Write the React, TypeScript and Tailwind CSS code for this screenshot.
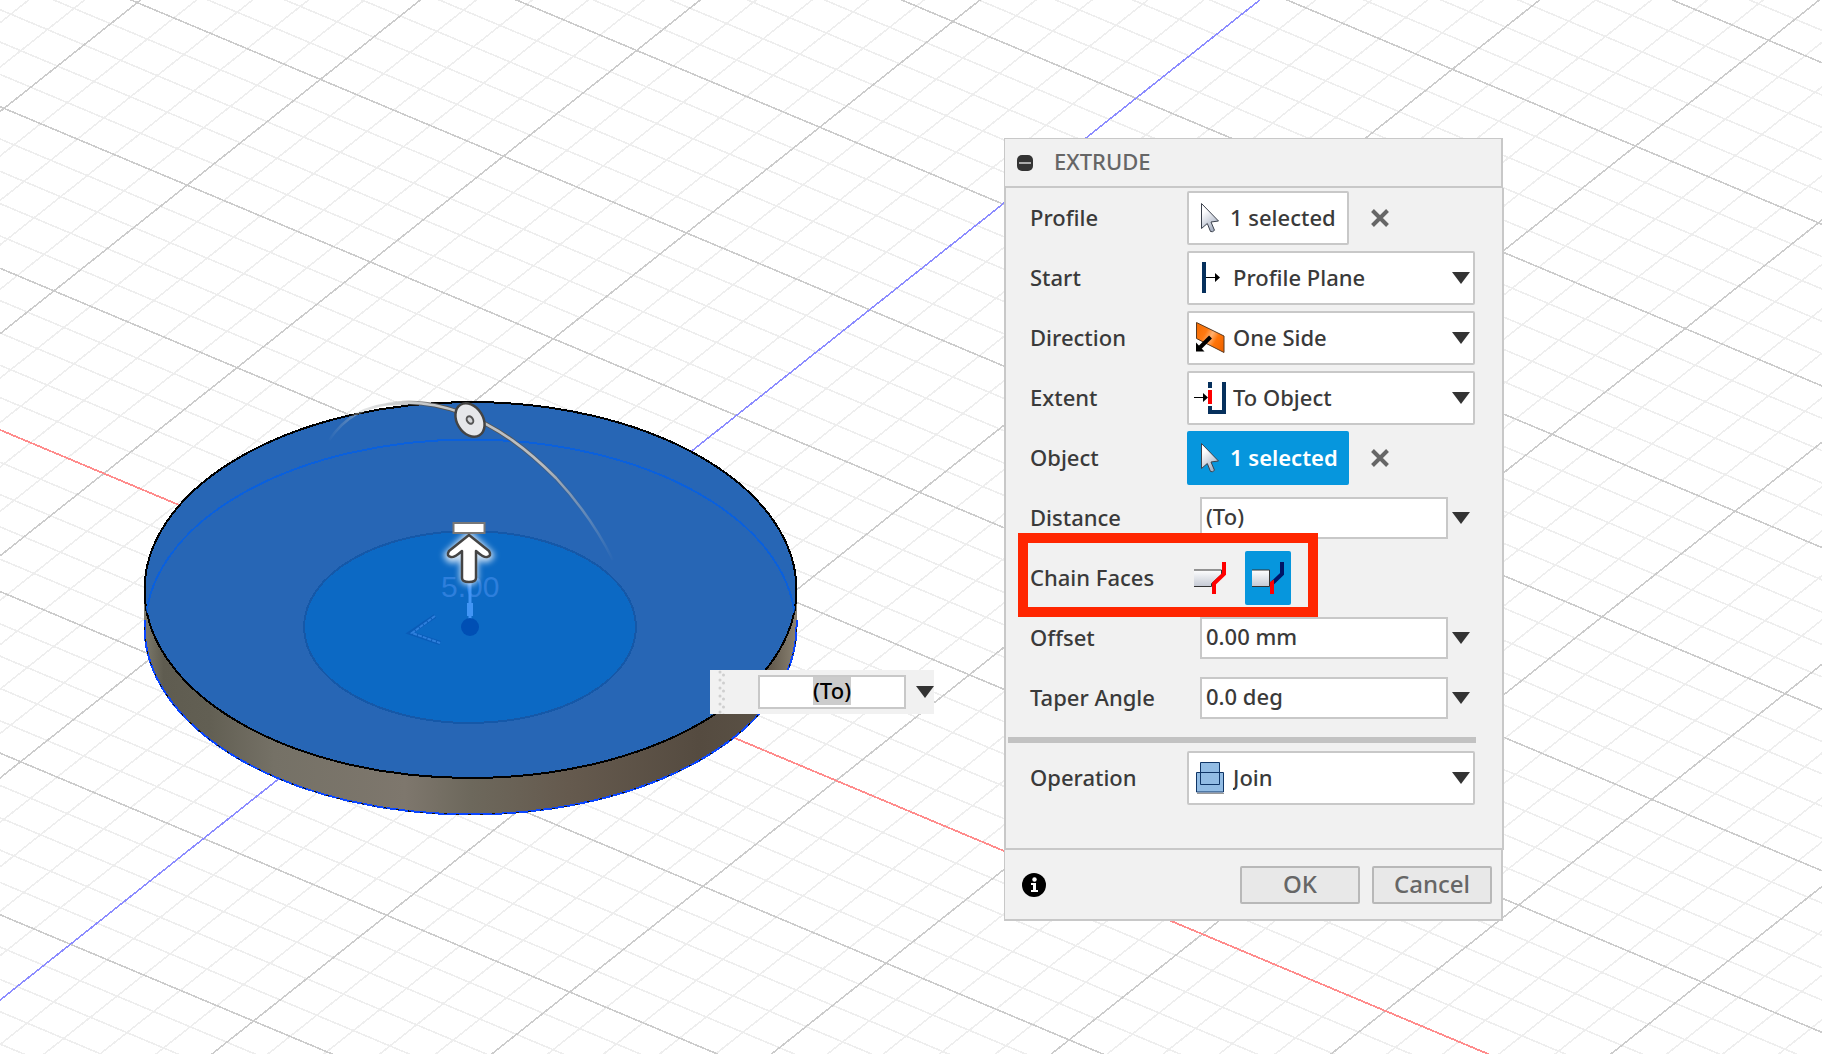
import { useEffect, useRef } from 'react';
import type { ReactNode } from 'react';

const NAVY = '#06305c';

// Ground plane: screen vectors of one major cell and the projected origin
const ORIGIN = { x: 470, y: 627 };
const U = { x: 183.08, y: 76.78 };
const V = { x: -133.2, y: 105.75 };
const SUBDIVISIONS = 5;
const REACH = 14;

interface GridLine {
  key: string;
  index: number;
  x1: number;
  y1: number;
  x2: number;
  y2: number;
}

function gridLines(step: typeof U, along: typeof U, name: string): GridLine[] {
  const lines: GridLine[] = [];
  for (let i = -REACH * SUBDIVISIONS; i <= REACH * SUBDIVISIONS; i++) {
    const cx = ORIGIN.x + (step.x * i) / SUBDIVISIONS;
    const cy = ORIGIN.y + (step.y * i) / SUBDIVISIONS;
    lines.push({
      key: `${name}${i}`,
      index: i,
      x1: cx - along.x * REACH,
      y1: cy - along.y * REACH,
      x2: cx + along.x * REACH,
      y2: cy + along.y * REACH,
    });
  }
  return lines;
}

const uLines = gridLines(V, U, 'u');
const vLines = gridLines(U, V, 'v');
const allLines = [...uLines, ...vLines];

function Line({ line, color, width }: { line: GridLine; color: string; width: number }) {
  return <line x1={line.x1} y1={line.y1} x2={line.x2} y2={line.y2} stroke={color} strokeWidth={width} />;
}

function Scene() {
  return (
    <svg
      viewBox="0 0 1822 1054"
      preserveAspectRatio="xMinYMin slice"
      className="absolute inset-0 h-full w-full"
      aria-hidden="true"
    >
      <defs>
        <linearGradient id="side" x1="144" x2="797" y1="0" y2="0" gradientUnits="userSpaceOnUse">
          <stop offset="0" stopColor="#7d7a6c" />
          <stop offset="0.03" stopColor="#5f5c50" />
          <stop offset="0.1" stopColor="#625f53" />
          <stop offset="0.2" stopColor="#757166" />
          <stop offset="0.4" stopColor="#7e776d" />
          <stop offset="0.5" stopColor="#6d685c" />
          <stop offset="0.65" stopColor="#655a4e" />
          <stop offset="0.85" stopColor="#554b40" />
          <stop offset="0.95" stopColor="#5a5145" />
          <stop offset="1" stopColor="#8a8272" />
        </linearGradient>
        <linearGradient id="arc" x1="328" x2="614" y1="0" y2="0" gradientUnits="userSpaceOnUse">
          <stop offset="0" stopColor="#c9cbcc" stopOpacity="0" />
          <stop offset="0.25" stopColor="#c9cbcc" />
          <stop offset="0.75" stopColor="#b9bcbe" />
          <stop offset="1" stopColor="#b9bcbe" stopOpacity="0" />
        </linearGradient>
        <linearGradient id="arcShade" x1="328" x2="614" y1="0" y2="0" gradientUnits="userSpaceOnUse">
          <stop offset="0.2" stopColor="#555" stopOpacity="0" />
          <stop offset="0.4" stopColor="#555" />
          <stop offset="0.6" stopColor="#555" />
          <stop offset="0.9" stopColor="#555" stopOpacity="0" />
        </linearGradient>
        <clipPath id="top">
          <ellipse cx="470.500" cy="590" rx="326" ry="188" />
        </clipPath>
        <filter id="glow" x="-50%" y="-50%" width="200%" height="200%">
          <feGaussianBlur stdDeviation="3" />
        </filter>
      </defs>

      <g shapeRendering="crispEdges">
        {allLines
          .filter((l) => l.index % SUBDIVISIONS !== 0)
          .map((l) => (
            <Line key={l.key} line={l} color="#eeeeee" width={1.6} />
          ))}
        {allLines
          .filter((l) => l.index % SUBDIVISIONS === 0 && l.index !== 0)
          .map((l) => (
            <Line key={l.key} line={l} color="#cccccc" width={1.6} />
          ))}
        {uLines.filter((l) => l.index === 0).map((l) => <Line key={l.key} line={l} color="#ff8c8c" width={1.8} />)}
        {vLines.filter((l) => l.index === 0).map((l) => <Line key={l.key} line={l} color="#8c8cff" width={1.6} />)}
      </g>

      {/* disk */}
      <g shapeRendering="crispEdges">
        <path d="M144 590V627A326.500 188 0 0 0 797 627V590Z" fill="url(#side)" />
        <path d="M144.500 620V627A326 187.500 0 0 0 796.500 627V620" fill="none" stroke="#0a46ff" strokeWidth="2" />
        <path
          d="M144.500 627A326 187.500 0 0 0 796.500 627"
          fill="none"
          stroke="#111"
          strokeWidth="1"
          strokeDasharray="3 9"
        />
        <ellipse cx="470.500" cy="590" rx="326" ry="188" fill="#2766b5" stroke="#000" strokeWidth="2" />
        <ellipse
          cx="470.500"
          cy="627"
          rx="325"
          ry="187.500"
          fill="none"
          stroke="#0a60dc"
          strokeWidth="2"
          clipPath="url(#top)"
          pathLength="100"
          strokeDasharray="50"
          strokeDashoffset="50"
        />
        <ellipse cx="470" cy="627" rx="166" ry="96" fill="#0c69c4" stroke="#1558a8" strokeWidth="2" />
      </g>

      {/* sketch marks */}
      <text x="441" y="597" fontSize="30" fill="#2e7fdc" className="font-['Liberation_Sans',sans-serif]">
        5.00
      </text>
      <path d="M470 582V620" stroke="#4295f5" strokeWidth="3" />
      <path d="M470 603V616" stroke="#4295f5" strokeWidth="6" />
      <circle cx="470" cy="627" r="9" fill="#004fb4" />
      <path d="M435 616L410 633L440 643" fill="none" stroke="#0a5cb8" strokeWidth="4" />
      <path d="M435 616L412 633L440 643" fill="none" stroke="#2e7fdc" strokeWidth="2" strokeDasharray="4 1" />

      {/* taper handle */}
      <path
        d="M329 440C343 420 362 404 402 403C420 402 440 405 462 413C500 428 528 450 556 478C582 506 600 534 613 560"
        fill="none"
        stroke="url(#arcShade)"
        strokeWidth="4.500"
      />
      <path
        d="M329 440C343 420 362 404 402 403C420 402 440 405 462 413C500 428 528 450 556 478C582 506 600 534 613 560"
        fill="none"
        stroke="url(#arc)"
        strokeWidth="2.500"
      />
      <g transform="rotate(-32 470 420)">
        <ellipse cx="470" cy="420" rx="13" ry="18" fill="#e6e7ea" stroke="#444" strokeWidth="2.500" />
        <ellipse cx="470" cy="420" rx="3" ry="4" fill="#d5d6d9" stroke="#555" strokeWidth="2" />
      </g>

      {/* distance arrow */}
      <path
        d="M469 534L447 555Q449 562 456 559L463 554V579Q469 585 475 579V554L483 559Q490 560 491 555Z"
        fill="#fff"
        stroke="#fff"
        strokeWidth="6"
        opacity="0.800"
        filter="url(#glow)"
      />
      <rect x="453.500" y="523" width="31" height="10" fill="#fff" stroke="#777" strokeWidth="2" />
      <path
        d="M469 535L449 551Q446 556 451 557Q454 558 462 551V578Q462 582 469 582Q476 582 476 578V551Q484 558 487 557Q492 556 489 551Z"
        fill="#fff"
        stroke="#444"
        strokeWidth="2.500"
        strokeLinejoin="round"
      />
    </svg>
  );
}

function Icon({ children }: { children: ReactNode }) {
  return (
    <svg viewBox="0 0 32 32" className="h-8 w-8 shrink-0" aria-hidden="true">
      {children}
    </svg>
  );
}

function CursorIcon() {
  return (
    <Icon>
      <defs>
        <linearGradient id="cursor" x1="0" x2="0.500" y1="0" y2="1">
          <stop offset="0.300" stopColor="#fdfdfe" />
          <stop offset="1" stopColor="#a9b2c4" />
        </linearGradient>
      </defs>
      <path
        d="M7.500 1.500V26.500L13.300 21.500L16.500 29.500Q18.500 30.500 20.500 28.300L17 20L24.500 19Z"
        fill="url(#cursor)"
        stroke="#3c424d"
        strokeWidth="1"
        strokeLinejoin="round"
      />
    </Icon>
  );
}

function PlaneIcon() {
  return (
    <Icon>
      <path d="M8 0H12V31H8Z" fill={NAVY} />
      <path d="M12 15H22V16H12ZM21 11L26 15.500L21 20Z" fill="#000" />
    </Icon>
  );
}

function OneSideIcon() {
  return (
    <Icon>
      <defs>
        <linearGradient id="orange" x1="0" x2="1" y1="0.200" y2="0.800">
          <stop offset="0" stopColor="#f56d05" />
          <stop offset="0.300" stopColor="#ff7a12" />
          <stop offset="0.500" stopColor="#ffb070" />
          <stop offset="0.700" stopColor="#ff7408" />
          <stop offset="1" stopColor="#f06400" />
        </linearGradient>
      </defs>
      <path d="M2.500 0.500L30 14V30.500L2.500 16.500Z" fill="url(#orange)" stroke="#5a3a20" strokeWidth="1" />
      <path d="M16.500 15L6 25.500" stroke="#000" strokeWidth="4" />
      <path d="M2 29.500V20.500L10.500 29.500Z" fill="#000" />
    </Icon>
  );
}

function ToObjectIcon() {
  return (
    <Icon>
      <path d="M14 0H18V6H14ZM14 24H18V28H28V0H32V32H14Z" fill={NAVY} />
      <path d="M14 8H18V22H14Z" fill="#f00" />
      <path d="M0 15H10V16H0ZM9 11L14 15.500L9 20Z" fill="#000" />
    </Icon>
  );
}

function JoinIcon() {
  return (
    <Icon>
      <path d="M3 31.500H30" stroke="#999" strokeWidth="1" />
      <path d="M6.500 0.500H25.500V10.500H29.500V30H2.500V10.500H6.500Z" fill="#92bce4" />
      <path d="M6.500 0.500H25.500V22.500H6.500ZM2.500 10.500H29.500V30H2.500Z" fill="none" stroke="#0f3566" strokeWidth="1" />
    </Icon>
  );
}

function FaceGradient({ id }: { id: string }) {
  return (
    <linearGradient id={id} x1="0" x2="0" y1="0" y2="1">
      <stop offset="0" stopColor="#fff" />
      <stop offset="1" stopColor="#c4c9d4" />
    </linearGradient>
  );
}

function ChainOnIcon() {
  return (
    <Icon>
      <defs>
        <FaceGradient id="faceOn" />
      </defs>
      <path d="M0 8H27.500V12.500L17.500 21.500V24.500H0Z" fill="url(#faceOn)" />
      <path d="M0 8H27.500V12.500L17.500 21.500V24.500H0" fill="none" stroke="#333" strokeWidth="1" />
      <path d="M30 0V12L20 21.500V32" fill="none" stroke="#f00" strokeWidth="4" />
    </Icon>
  );
}

function ChainOffIcon() {
  return (
    <Icon>
      <defs>
        <FaceGradient id="faceOff" />
      </defs>
      <path d="M0 8H17.500V24.500H0Z" fill="url(#faceOff)" />
      <path d="M0 8H17.500V24.500H0" fill="none" stroke="#333" strokeWidth="1" />
      <path d="M30 0V12L20.500 21" fill="none" stroke="#001466" strokeWidth="4" />
      <path d="M18 20L22 17.500V32H18Z" fill="#f00" />
    </Icon>
  );
}

function Triangle() {
  return (
    <svg viewBox="0 0 18 12" className="h-3 w-[18px] shrink-0" aria-hidden="true">
      <path d="M0 0H18L9 12Z" fill="#333" />
    </svg>
  );
}

function Row({ label, htmlFor, children }: { label: string; htmlFor: string; children: ReactNode }) {
  return (
    <div className="relative flex h-[60px] items-center pr-[27px] pl-6">
      <label htmlFor={htmlFor} className="w-[157px] shrink-0 pb-0.5">
        {label}
      </label>
      {children}
    </div>
  );
}

function SelectRow({ id, label, value, icon }: { id: string; label: string; value: string; icon: ReactNode }) {
  return (
    <Row label={label} htmlFor={id}>
      <div className="relative flex-1">
        <select
          id={id}
          className="block h-[54px] w-full appearance-none rounded-xs border-2 border-[#c8c8c8] bg-white pr-8 pb-0.5 pl-11 outline-none"
        >
          <option>{value}</option>
        </select>
        <span className="pointer-events-none absolute inset-y-0 left-[7px] flex items-center">{icon}</span>
        <span className="pointer-events-none absolute inset-y-0 right-[5px] flex items-center">
          <Triangle />
        </span>
      </div>
    </Row>
  );
}

function SelectionRow({ id, label, active = false }: { id: string; label: string; active?: boolean }) {
  return (
    <Row label={label} htmlFor={id}>
      <button
        id={id}
        type="button"
        className={`flex h-[54px] w-[162px] items-center gap-1 rounded-xs border-2 pl-[5px] whitespace-nowrap ${
          active ? 'border-[#0696dd] bg-[#0696dd] font-semibold text-white' : 'border-[#c8c8c8] bg-white'
        }`}
      >
        <CursorIcon />
        <span className="pb-0.5">1 selected</span>
      </button>
      <button type="button" aria-label={`Clear ${label}`} className="ml-[22px]">
        <svg viewBox="0 0 18 18" className="h-[18px] w-[18px]" aria-hidden="true">
          <path d="M1.500 1.500L16.500 16.500M16.500 1.500L1.500 16.500" stroke="#666" strokeWidth="4" />
        </svg>
      </button>
    </Row>
  );
}

function ValueRow({ id, label, value }: { id: string; label: string; value: string }) {
  return (
    <Row label={label} htmlFor={id}>
      <input
        id={id}
        defaultValue={value}
        className="ml-[13px] h-[42px] min-w-0 flex-1 border-2 border-[#c8c8c8] bg-white px-1 pb-1 outline-none"
      />
      <button type="button" aria-label={`${label} options`} className="mr-[5px] ml-1">
        <Triangle />
      </button>
    </Row>
  );
}

function ExtrudePanel() {
  return (
    <section className="w-[500px] text-[22px] font-medium text-[#3a3a3a]">
      <header className="mr-px flex h-[50px] items-center border border-r-2 border-b-2 border-[#c8c8c8] bg-[#f1f1f1] pl-3">
        <button type="button" aria-label="Collapse">
          <svg viewBox="0 0 16 16" className="h-4 w-4" aria-hidden="true">
            <rect width="16" height="16" rx="5" fill="#333" />
            <path d="M2 8H14" stroke="#aaa" strokeWidth="2" />
          </svg>
        </button>
        <h2 className="ml-[21px] pb-0.5 text-[#666]">EXTRUDE</h2>
      </header>

      <div className="border-x-2 border-b-2 border-[#c8c8c8] bg-[#f1f1f1] pb-10">
        <SelectionRow id="profile" label="Profile" />
        <SelectRow id="start" label="Start" value="Profile Plane" icon={<PlaneIcon />} />
        <SelectRow id="direction" label="Direction" value="One Side" icon={<OneSideIcon />} />
        <SelectRow id="extent" label="Extent" value="To Object" icon={<ToObjectIcon />} />
        <SelectionRow id="object" label="Object" active />
        <ValueRow id="distance" label="Distance" value="(To)" />
        <Row label="Chain Faces" htmlFor="chain-on">
          <div className="flex gap-3">
            <button
              id="chain-on"
              type="button"
              aria-pressed="false"
              className="flex h-[54px] w-[46px] items-center justify-center"
            >
              <ChainOnIcon />
            </button>
            <button
              type="button"
              aria-label="Do not chain faces"
              aria-pressed="true"
              className="flex h-[54px] w-[46px] items-center justify-center rounded-xs bg-[#0696dd]"
            >
              <ChainOffIcon />
            </button>
          </div>
          <div className="pointer-events-none absolute -top-[15px] -bottom-[9px] left-3 z-10 w-[300px] border-10 border-[#ff2600]" />
        </Row>
        <ValueRow id="offset" label="Offset" value="0.00 mm" />
        <ValueRow id="taper" label="Taper Angle" value="0.0 deg" />
        <hr className="mt-[9px] mr-[26px] mb-[5px] ml-0.5 h-1.5 border-0 bg-[#c2c2c2]" />
        <SelectRow id="operation" label="Operation" value="Join" icon={<JoinIcon />} />
      </div>

      <footer className="mr-px flex h-[71px] items-center gap-3 border border-t-0 border-r-2 border-b-2 border-[#c8c8c8] bg-[#f1f1f1] pr-[9px] pl-[17px] text-2xl text-[#666]">
        <button type="button" aria-label="Info" className="mr-auto">
          <svg viewBox="0 0 24 24" className="h-6 w-6" aria-hidden="true">
            <circle cx="12" cy="12" r="12" fill="#000" />
            <circle cx="12.500" cy="6.500" r="2.200" fill="#fff" />
            <path d="M9 10H14V17H16V19H9V17H11V12H9Z" fill="#fff" />
          </svg>
        </button>
        <button type="button" className="h-[38px] w-[120px] rounded-xs border-2 border-[#b8b8b8] bg-[#e8e8e8] pb-0.5 leading-none">
          OK
        </button>
        <button type="button" className="h-[38px] w-[120px] rounded-xs border-2 border-[#b8b8b8] bg-[#e8e8e8] pb-0.5 leading-none">
          Cancel
        </button>
      </footer>
    </section>
  );
}

function FloatingInput() {
  const input = useRef<HTMLInputElement>(null);

  useEffect(() => {
    input.current?.focus();
    input.current?.select();
  }, []);

  return (
    <div className="absolute top-[670px] left-[710px] flex h-11 w-56 items-center bg-[#f1f1f1] text-[22px] font-medium text-black">
      <svg viewBox="0 0 8 44" className="ml-2 h-11 w-2" aria-hidden="true">
        {[2, 10, 18, 26, 34, 42].map((y) => (
          <g key={y} fill="#cfcfcf">
            <circle cx="2" cy={y} r="1.500" />
            <circle cx="5.500" cy={y + 3} r="1.500" />
          </g>
        ))}
      </svg>
      <input
        ref={input}
        aria-label="Distance value"
        defaultValue="(To)"
        className="ml-8 h-[34px] w-[148px] border-2 border-[#c8c8c8] bg-white pb-1 text-center leading-[26px] outline-none selection:bg-[#cccccc] selection:text-black"
      />
      <button type="button" aria-label="Distance value options" className="ml-auto">
        <Triangle />
      </button>
    </div>
  );
}

export default function App() {
  return (
    <main className="relative min-h-screen overflow-hidden bg-white font-['Noto_Sans','Open_Sans',sans-serif]">
      <Scene />
      <FloatingInput />
      <div className="pointer-events-none relative flex justify-end pt-[138px] pr-[318px]">
        <div className="pointer-events-auto">
          <ExtrudePanel />
        </div>
      </div>
    </main>
  );
}
